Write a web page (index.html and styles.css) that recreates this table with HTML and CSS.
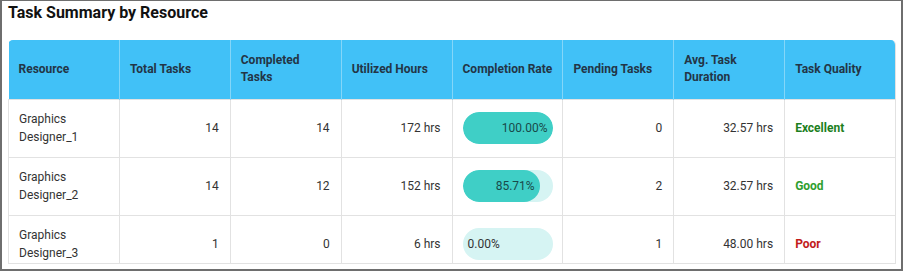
FILE: index.html
```html
<!DOCTYPE html>
<html>
<head>
<meta charset="utf-8">
<link rel="stylesheet" href="styles.css">
</head>
<body>
<div class="frame">
  <h1 class="title">Task Summary by Resource</h1>
  <div class="table-wrap">
    <table class="grid">
      <thead>
        <tr>
          <th>Resource</th>
          <th>Total Tasks</th>
          <th>Completed Tasks</th>
          <th>Utilized Hours</th>
          <th>Completion Rate</th>
          <th>Pending Tasks</th>
          <th>Avg. Task Duration</th>
          <th>Task Quality</th>
        </tr>
      </thead>
      <tbody>
        <tr>
          <td>Graphics Designer_1</td>
          <td class="num">14</td>
          <td class="num">14</td>
          <td class="num">172 hrs</td>
          <td><div class="track"><div class="fill" style="width:100%">100.00%</div></div></td>
          <td class="num">0</td>
          <td class="num">32.57 hrs</td>
          <td><span class="q excellent">Excellent</span></td>
        </tr>
        <tr>
          <td>Graphics Designer_2</td>
          <td class="num">14</td>
          <td class="num">12</td>
          <td class="num">152 hrs</td>
          <td><div class="track"><div class="fill" style="width:85.71%">85.71%</div></div></td>
          <td class="num">2</td>
          <td class="num">32.57 hrs</td>
          <td><span class="q good">Good</span></td>
        </tr>
        <tr>
          <td>Graphics Designer_3</td>
          <td class="num">1</td>
          <td class="num">0</td>
          <td class="num">6 hrs</td>
          <td><div class="track"><div class="fill empty" style="width:0%">0.00%</div></div></td>
          <td class="num">1</td>
          <td class="num">48.00 hrs</td>
          <td><span class="q poor">Poor</span></td>
        </tr>
      </tbody>
    </table>
  </div>
</div>
</body>
</html>
```

FILE: styles.css
```css
html, body {
  margin: 0;
  padding: 0;
  background: #ffffff;
}

.frame {
  box-sizing: border-box;
  width: 903px;
  height: 271px;
  border-top: 1px solid #6e6e6e;
  border-left: 2px solid #6e6e6e;
  border-right: 2px solid #6e6e6e;
  border-bottom: 2px solid #6e6e6e;
  padding: 2px 0 0 6px;
  overflow: hidden;
  font-family: Roboto, "Liberation Sans", Arial, sans-serif;
}

.title {
  margin: 0 0 17px 0;
  font-size: 16px;
  line-height: 20px;
  font-weight: 700;
  color: #111111;
}

.table-wrap {
  box-sizing: border-box;
  width: 888px;
  height: 224px;
  overflow: hidden;
  border-radius: 5px 5px 0 0;
  border-bottom: 1px solid #e2e2e2;
  border-right: 1px solid #e2e2e2;
}

.grid {
  width: 888px;
  border-collapse: collapse;
  table-layout: fixed;
  font-size: 12px;
}

.grid th {
  background: #41c1f7;
  color: #233546;
  font-weight: 700;
  text-align: left;
  vertical-align: middle;
  height: 59px;
  box-sizing: border-box;
  padding: 0 10px 0 10px;
  line-height: 17px;
  border-left: 1px solid #84d6f8;
}

.grid th:first-child {
  border-left: none;
}

.grid td {
  height: 58px;
  box-sizing: border-box;
  padding: 0 11px 0 10px;
  color: #333333;
  line-height: 18px;
  border: 1px solid #e2e2e2;
  vertical-align: middle;
}

.grid td.num {
  text-align: right;
}

.track {
  width: 90px;
  height: 32px;
  border-radius: 16px;
  background: #d6f4f3;
  overflow: hidden;
}

.fill {
  box-sizing: border-box;
  height: 32px;
  border-radius: 16px;
  background: #3fcfc6;
  color: #194a4a;
  text-align: right;
  padding-right: 5px;
  line-height: 32px;
  white-space: nowrap;
}

.fill.empty {
  background: transparent;
  text-align: left;
  padding: 0 0 0 5px;
  color: #333333;
  overflow: visible;
}

.q {
  font-weight: 700;
}

.q.excellent { color: #1d7f1d; }
.q.good { color: #2f9e2f; }
.q.poor { color: #c21b1b; }
```
